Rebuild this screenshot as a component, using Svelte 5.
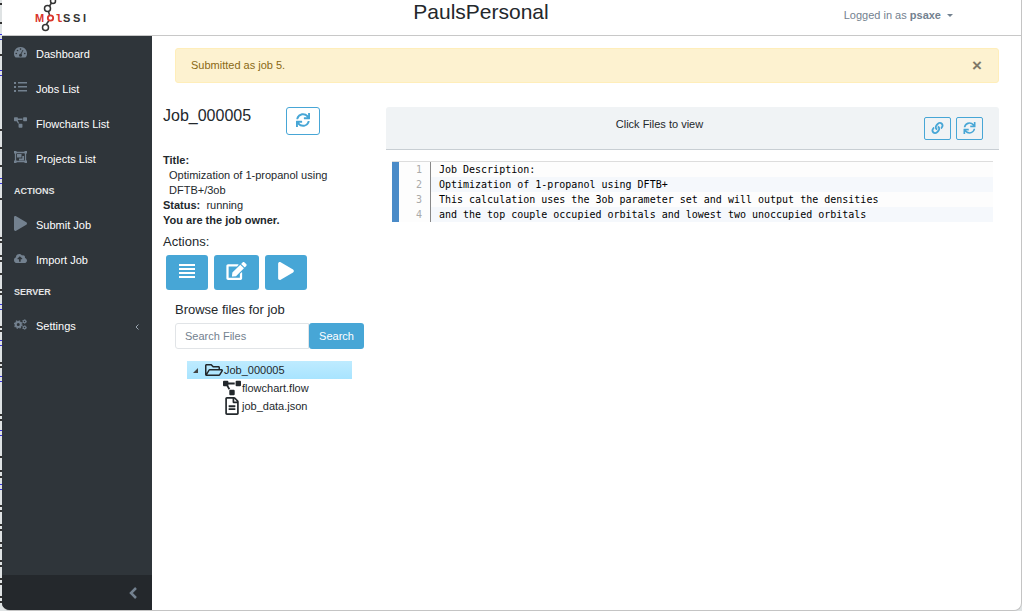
<script>
  const sync = 'M440.65 12.57l4 82.77A247.16 247.16 0 0 0 255.83 8C134.73 8 33.91 94.92 12.29 209.82A12 12 0 0 0 24.09 224h49.05a12 12 0 0 0 11.67-9.26 175.91 175.91 0 0 1 317-56.94l-101.46-4.86a12 12 0 0 0-12.57 12v47.41a12 12 0 0 0 12 12H500a12 12 0 0 0 12-12V12a12 12 0 0 0-12-12h-47.37a12 12 0 0 0-11.98 12.57zM255.83 432a175.61 175.61 0 0 1-146-77.8l101.8 4.87a12 12 0 0 0 12.57-12v-47.4a12 12 0 0 0-12-12H12a12 12 0 0 0-12 12V500a12 12 0 0 0 12 12h47.35a12 12 0 0 0 12-12.6l-4.15-82.57A247.17 247.17 0 0 0 255.83 504c121.11 0 221.93-86.92 243.55-201.82a12 12 0 0 0-11.8-14.18h-49.05a12 12 0 0 0-11.67 9.26A175.86 175.86 0 0 1 255.83 432z';
  const play = 'M424.4 214.7L72.4 6.6C43.8-10.3 0 6.1 0 47.9V464c0 37.5 40.7 60.1 72.4 41.3l352-208c31.4-18.5 31.5-64.1 0-82.6z';
  const edit = 'M402.6 83.2l90.2 90.2c3.8 3.8 3.8 10 0 13.8L274.4 405.6l-92.8 10.3c-12.4 1.4-22.9-9.1-21.5-21.5l10.3-92.8L388.8 83.2c3.8-3.8 10-3.8 13.8 0zm162-22.9l-48.8-48.8c-15.2-15.2-39.9-15.2-55.2 0l-35.4 35.4c-3.8 3.8-3.8 10 0 13.8l90.2 90.2c3.8 3.8 10 3.8 13.8 0l35.4-35.4c15.2-15.3 15.2-40 0-55.2zM384 346.2V448H64V128h229.8c3.2 0 6.2-1.3 8.5-3.5l40-40c7.6-7.6 2.2-20.5-8.5-20.5H48C21.5 64 0 85.5 0 112v352c0 26.5 21.5 48 48 48h352c26.5 0 48-21.5 48-48V306.2c0-10.7-12.9-16-20.5-8.5l-40 40c-2.2 2.3-3.5 5.3-3.5 8.5z';
  const folder = 'M527.9 224H480v-48c0-26.5-21.5-48-48-48H272l-64-64H48C21.5 64 0 85.5 0 112v288c0 26.5 21.5 48 48 48h400c16.5 0 31.9-8.5 40.7-22.6l79.9-128c20-31.9-3-73.4-40.7-73.4zM48 118c0-3.3 2.7-6 6-6h134.1l64 64H426c3.3 0 6 2.7 6 6v42H152c-16.8 0-32.4 8.8-41.1 23.2L48 351.4zm400 282H72l77.2-128H528z';
  const diagram = 'M384 320H256c-17.67 0-32 14.33-32 32v128c0 17.67 14.33 32 32 32h128c17.67 0 32-14.33 32-32V352c0-17.67-14.33-32-32-32zM192 32c0-17.67-14.33-32-32-32H32C14.33 0 0 14.33 0 32v128c0 17.67 14.33 32 32 32h95.72l73.16 128.04C211.98 300.98 232.4 288 256 288h.28L192 175.51V128h224V64H192V32zM608 0H480c-17.67 0-32 14.33-32 32v128c0 17.67 14.33 32 32 32h128c17.67 0 32-14.33 32-32V32c0-17.67-14.33-32-32-32z';
  const file = 'M288 248v28c0 6.6-5.4 12-12 12H108c-6.6 0-12-5.4-12-12v-28c0-6.6 5.4-12 12-12h168c6.6 0 12 5.4 12 12zm-12 72H108c-6.6 0-12 5.4-12 12v28c0 6.6 5.4 12 12 12h168c6.6 0 12-5.4 12-12v-28c0-6.6-5.4-12-12-12zm108-188.1V464c0 26.5-21.5 48-48 48H48c-26.5 0-48-21.5-48-48V48C0 21.5 21.5 0 48 0h204.1C264.8 0 277 5.1 286 14.1L369.9 98c9 8.9 14.1 21.2 14.1 33.9zm-128-80V128h76.1L256 51.9zM336 464V176H232c-13.3 0-24-10.7-24-24V48H48v416h288z';
  const link = 'M326.612 185.391c59.747 59.809 58.927 155.698.36 214.59-.11.12-.24.25-.36.37l-67.2 67.2c-59.27 59.27-155.699 59.262-214.96 0-59.27-59.26-59.27-155.7 0-214.96l37.106-37.106c9.84-9.84 26.786-3.3 27.294 10.606.648 17.722 3.826 35.527 9.69 52.721 1.986 5.822.567 12.262-3.783 16.612l-13.087 13.087c-28.026 28.026-28.905 73.66-1.155 101.96 28.024 28.579 74.086 28.749 102.325.51l67.2-67.19c28.191-28.191 28.073-73.757 0-101.83-3.701-3.694-7.429-6.564-10.341-8.569a16.037 16.037 0 0 1-6.947-12.606c-.396-10.567 3.348-21.456 11.698-29.806l21.054-21.055c5.521-5.521 14.182-6.199 20.584-1.731a152.482 152.482 0 0 1 20.522 17.197zM467.547 44.449c-59.261-59.262-155.69-59.27-214.96 0l-67.2 67.2c-.12.12-.25.25-.36.37-58.566 58.892-59.387 154.781.36 214.59a152.454 152.454 0 0 0 20.521 17.196c6.402 4.468 15.064 3.789 20.584-1.731l21.054-21.055c8.35-8.35 12.094-19.239 11.698-29.806a16.037 16.037 0 0 0-6.947-12.606c-2.912-2.005-6.64-4.875-10.341-8.569-28.073-28.073-28.191-73.639 0-101.83l67.2-67.19c28.239-28.239 74.3-28.069 102.325.51 27.75 28.3 26.872 73.934-1.155 101.96l-13.087 13.087c-4.35 4.35-5.769 10.79-3.783 16.612 5.864 17.194 9.042 34.999 9.69 52.721.509 13.906 17.454 20.446 27.294 10.606l37.106-37.106c59.271-59.259 59.271-155.699.001-214.959z';
  const cloud = 'M537.6 226.6c4.1-10.7 6.4-22.4 6.4-34.6 0-53-43-96-96-96-19.7 0-38.1 6-53.3 16.2C367 64.2 315.3 32 256 32c-88.4 0-160 71.6-160 160 0 2.7.1 5.4.2 8.1C40.2 219.8 0 273.2 0 336c0 79.5 64.5 144 144 144h368c70.7 0 128-57.3 128-128 0-61.9-44-113.6-102.4-125.4zM393.4 288H328v112c0 8.8-7.2 16-16 16h-48c-8.8 0-16-7.2-16-16V288h-65.4c-14.3 0-21.4-17.2-11.3-27.3l105.4-105.4c6.2-6.2 16.4-6.2 22.6 0l105.4 105.4c10.1 10.1 2.9 27.3-11.3 27.3z';

  const groups = [
    { title: '', items: [['gauge', 'Dashboard'], ['list', 'Jobs List'], ['diagram', 'Flowcharts List'], ['group', 'Projects List']] },
    { title: 'ACTIONS', items: [['play', 'Submit Job'], ['cloud', 'Import Job']] },
    { title: 'SERVER', items: [['cogs', 'Settings']] }
  ];
  const lines = [
    'Job Description:',
    'Optimization of 1-propanol using DFTB+',
    'This calculation uses the 3ob parameter set and will output the densities',
    'and the top couple occupied orbitals and lowest two unoccupied orbitals'
  ];
  const darkMarks = [3, 22, 54, 129, 147, 165, 198, 237, 241, 255, 260, 273, 289, 293, 326, 330, 362, 366, 414, 419, 456, 470, 476, 505, 510, 524, 529, 542, 547, 560, 565, 578, 583, 596, 601];
  const linkMarks = [34, 39, 70, 75, 178, 183, 304, 309, 340, 345, 376, 381, 430, 435, 484, 489];

  let alertOpen = $state(true);
  let query = $state('');
</script>

{#snippet glyph(path, box, cls)}
  <svg class={cls} viewBox={box} fill="currentColor" aria-hidden="true"><path d={path} /></svg>
{/snippet}

{#snippet navIcon(name)}
  {#if name === 'diagram'}
    {@render glyph(diagram, '0 0 640 512', 'nav-icon')}
  {:else if name === 'play'}
    {@render glyph(play, '0 0 448 512', 'nav-icon play')}
  {:else if name === 'cloud'}
    {@render glyph(cloud, '0 0 640 512', 'nav-icon')}
  {:else if name === 'gauge'}
    <svg class="nav-icon" viewBox="0 0 26 22" aria-hidden="true">
      <path fill="currentColor" d="M13 0a13 13 0 0 0-11.200 19.600q.6 1.400 2 1.400h18.400q1.400 0 2-1.400A13 13 0 0 0 13 0z" />
      <g fill="#2f353a"><circle cx="4.500" cy="13" r="1.600" /><circle cx="7" cy="7" r="1.600" /><circle cx="13" cy="4.200" r="1.600" /><circle cx="21.500" cy="13" r="1.600" /><circle cx="13" cy="16.500" r="3" /></g>
      <path d="M13 16L18 6" stroke="#2f353a" stroke-width="1.800" />
    </svg>
  {:else if name === 'list'}
    <svg class="nav-icon" viewBox="0 0 13 13" fill="currentColor" aria-hidden="true">
      <path d="M0 1h2v2H0zM0 5h2v2H0zM0 9h2v2H0zM4 1h9v1.500H4zM4 5h9v1.500H4zM4 9h9v1.500H4z" />
    </svg>
  {:else if name === 'group'}
    <svg class="nav-icon" viewBox="0 0 13 13" aria-hidden="true">
      <path d="M1.500 1.500h10v9h-10z" fill="none" stroke="currentColor" stroke-width="1.300" />
      <path fill="currentColor" d="M0 0h2.500v2.500H0zM10.500 0H13v2.500h-2.500zM0 9.500h2.500V12H0zM10.500 9.500H13V12h-2.500zM3 3h4.500v3.500H3zM8.300 5H10v4.500H5V7.500h3.300z" />
    </svg>
  {:else}
    <svg class="nav-icon" viewBox="0 0 26 22" fill="none" stroke="currentColor" aria-hidden="true">
      <circle cx="8.500" cy="11" r="5" stroke-width="4" />
      <circle cx="8.500" cy="11" r="7.500" stroke-width="2.500" stroke-dasharray="3 2.890" />
      <circle cx="21" cy="5" r="2.600" stroke-width="2.200" /><circle cx="21" cy="5" r="4" stroke-width="1.500" stroke-dasharray="2 2.190" />
      <circle cx="21" cy="17" r="2.600" stroke-width="2.200" /><circle cx="21" cy="17" r="4" stroke-width="1.500" stroke-dasharray="2 2.190" />
    </svg>
  {/if}
{/snippet}

<div class="desktop">
  <svg class="behind" aria-hidden="true">
    {#each darkMarks as y}<rect x="0" {y} width="2" height="2" fill="#333" />{/each}
    {#each linkMarks as y}<rect x="0" {y} width="2" height="1" fill="#3a35e0" />{/each}
  </svg>
  <div class="window">
    <header>
      <a class="brand" href="#home" aria-label="MolSSI">
        <svg viewBox="0 0 60 35" aria-hidden="true">
          <g fill="none" stroke="#333" stroke-width="1.500">
            <circle cx="18" cy="1" r="2.500" /><path d="M16.500 3L14.500 6" />
            <circle cx="12.500" cy="8.500" r="3" /><path d="M13.500 11.500L14.500 15M14 20.500L11.500 24" />
            <circle cx="10.500" cy="27.500" r="3" />
          </g>
          <circle cx="15.500" cy="18" r="2.700" fill="none" stroke="#d9342b" stroke-width="1.800" />
          <g font-family="Liberation Sans, Arial, sans-serif" font-weight="bold" font-size="11">
            <text x="0" y="22" fill="#d9342b">M</text>
            <text x="28" y="22" fill="#333">S</text><text x="38" y="22" fill="#333">S</text><text x="48" y="22" fill="#333">I</text>
            <text x="21" y="22" fill="#d9342b" font-family="DejaVu Sans Mono, monospace">l</text>
          </g>
        </svg>
      </a>
      <h1>PaulsPersonal</h1>
      <button class="user" type="button">Logged in as <b>psaxe</b><span class="caret"></span></button>
    </header>

    <div class="body">
      <aside>
        <nav>
          {#each groups as group}
            {#if group.title}<h2>{group.title}</h2>{/if}
            {#each group.items as [icon, label]}
              <a class="item" href="#{icon}">
                {@render navIcon(icon)}
                <span>{label}</span>
                {#if icon === 'cogs'}
                  <svg class="more" viewBox="0 0 4 6" aria-hidden="true"><path d="M3.500.5L1 3l2.500 2.500" fill="none" stroke="currentColor" /></svg>
                {/if}
              </a>
            {/each}
          {/each}
        </nav>
        <button class="minimizer" type="button" aria-label="Collapse sidebar">
          <svg viewBox="0 0 8 12" aria-hidden="true"><path d="M7 1L2 6l5 5" fill="none" stroke="currentColor" stroke-width="2.500" /></svg>
        </button>
      </aside>

      <main>
        {#if alertOpen}
          <div class="alert" role="alert">
            <span>Submitted as job 5.</span>
            <button type="button" aria-label="Close" onclick={() => (alertOpen = false)}>×</button>
          </div>
        {/if}

        <div class="columns">
          <section class="job">
            <div class="job-head">
              <h3>Job_000005</h3>
              <button class="outline large" type="button" aria-label="Refresh job">{@render glyph(sync, '0 0 512 512', 'i14')}</button>
            </div>
            <div class="details">
              <b>Title:</b>
              <p>Optimization of 1-propanol using DFTB+/3ob</p>
              <div><b>Status:</b>&nbsp; running</div>
              <b>You are the job owner.</b>
            </div>
            <h4>Actions:</h4>
            <div class="actions">
              <button class="solid" type="button" aria-label="Job description">
                <svg class="i18" viewBox="0 0 18 18" fill="currentColor" aria-hidden="true"><path d="M1 2h16v2H1zM1 6h16v2H1zM1 10h16v2H1zM1 14h16v2H1z" /></svg>
              </button>
              <button class="solid" type="button" aria-label="Edit job">{@render glyph(edit, '0 0 576 512', 'i20')}</button>
              <button class="solid" type="button" aria-label="Run job">{@render glyph(play, '0 0 448 512', 'i18')}</button>
            </div>
            <div class="browse">
              <h4><label for="file-search">Browse files for job</label></h4>
              <form class="search" onsubmit={(e) => e.preventDefault()}>
                <input id="file-search" type="text" placeholder="Search Files" bind:value={query} />
                <button type="submit">Search</button>
              </form>
              <ul class="tree">
                <li>
                  <a class="root" href="#job">
                    <svg class="toggle" viewBox="0 0 6 6" aria-hidden="true"><path d="M6 0v6H0z" fill="#444" /></svg>
                    {@render glyph(folder, '0 0 576 512', 'i18')}<span>Job_000005</span>
                  </a>
                  <ul>
                    <li><a href="#flowchart">{@render glyph(diagram, '0 0 640 512', 'i18')}<span>flowchart.flow</span></a></li>
                    <li><a href="#data">{@render glyph(file, '0 0 384 512', 'i18')}<span>job_data.json</span></a></li>
                  </ul>
                </li>
              </ul>
            </div>
          </section>

          <section class="viewer">
            <div class="viewer-head">
              <span></span>
              <span class="hint">Click Files to view</span>
              <div class="tools">
                <button class="outline" type="button" aria-label="Copy link">{@render glyph(link, '0 0 512 512', 'i12')}</button>
                <button class="outline" type="button" aria-label="Refresh file">{@render glyph(sync, '0 0 512 512', 'i12')}</button>
              </div>
            </div>
            <ol class="code">
              {#each lines as line, i}
                <li><span class="number">{i + 1}</span><code>{line}</code></li>
              {/each}
            </ol>
          </section>
        </div>
      </main>
    </div>
  </div>
</div>

<style>
  :global(body) { background: #dfe3e4; }
  .desktop, .desktop * { box-sizing: border-box; }
  .desktop {
    position: relative;
    display: flex;
    min-height: 100vh;
    padding-left: 2px;
    color: #23282c;
    font: 11px/15px "Liberation Sans", Arial, sans-serif;
  }
  .behind { position: absolute; left: 0; top: 0; width: 2px; height: 100%; }
  .window {
    flex: 1;
    display: flex;
    flex-direction: column;
    overflow: hidden;
    background: #fff;
    border: solid #c4c4c4;
    border-width: 0 1px 1px 0;
    border-radius: 0 0 8px 8px;
  }
  h1, h2, h3, h4, p, ul, ol { margin: 0; padding: 0; font-weight: normal; }
  ul, ol { list-style: none; }
  button, input { font: inherit; margin: 0; }
  button { cursor: pointer; }
  a { color: inherit; text-decoration: none; }
  svg { display: block; flex: none; }

  header {
    display: grid;
    grid-template-columns: 1fr auto 1fr;
    height: 36px;
    padding: 0 68px 0 33px;
    border-bottom: 1px solid #c8c8c8;
  }
  .brand svg { width: 60px; height: 35px; }
  h1 { font-size: 21px; line-height: 24px; margin-right: 26px; }
  .user {
    display: flex;
    align-items: center;
    justify-self: end;
    height: 30px;
    padding: 0;
    border: 0;
    background: none;
    color: #73818f;
    white-space: pre;
  }
  .caret { margin-left: 6px; border: 3px solid transparent; border-top-color: currentColor; border-bottom: 0; }

  .body { flex: 1; display: flex; }
  aside { flex: none; display: flex; flex-direction: column; width: 150px; background: #2f353a; color: #fff; }
  nav { flex: 1; padding-top: 1px; }
  .item { display: flex; align-items: center; gap: 9px; height: 35px; padding: 0 13px 0 12px; }
  .nav-icon { width: 13px; height: 13px; margin-bottom: 4px; color: #73818f; }
  .play { height: 15px; }
  .more { width: 4px; height: 6px; margin-left: auto; color: #9aa5b0; }
  h2 { height: 31px; padding: 7px 12px; color: #e4e5e6; font-size: 9px; font-weight: bold; }
  .minimizer {
    display: flex;
    align-items: center;
    justify-content: flex-end;
    height: 35px;
    padding: 0 15px;
    border: 0;
    background: #24282c;
    color: #73818f;
  }
  .minimizer svg { width: 8px; height: 12px; }

  main { flex: 1; min-width: 0; padding: 12px 22px 12px 11px; }
  .alert {
    display: flex;
    align-items: center;
    justify-content: space-between;
    height: 35px;
    margin: 0 0 24px 12px;
    padding: 0 15px;
    border: 1px solid #ffeeba;
    border-radius: 3px;
    background: #fdf2d0;
    color: #8a6914;
  }
  .alert button { padding: 0; border: 0; background: none; color: #7f7968; font-size: 17px; font-weight: bold; width: 12px; }
  .columns { display: grid; grid-template-columns: 4fr 11fr; align-items: start; }

  .job { min-width: 0; }
  .job-head { display: flex; align-items: flex-start; gap: 35px; height: 46px; }
  h3 { font-size: 16px; line-height: 18px; }
  .outline {
    display: grid;
    place-items: center;
    width: 27px;
    height: 23px;
    padding: 0 0 2px;
    border: 1px solid #47a6d6;
    border-radius: 2px;
    background: transparent;
    color: #47a6d6;
  }
  .large { width: 34px; height: 28px; border-radius: 3px; background: #fff; }
  .details p { width: 170px; padding-left: 6px; }
  h4 { font-size: 13px; line-height: 16px; }
  .job > h4 { margin: 6px 0 5px; }
  .actions { display: flex; gap: 6px; padding-left: 3px; }
  .solid {
    display: grid;
    place-items: center;
    height: 35px;
    padding: 0 12px 3px;
    border: 0;
    border-radius: 3px;
    background: #47a6d6;
    color: #fff;
  }
  .i12 { width: 13px; height: 12px; }
  .i14 { width: 14px; height: 14px; }
  .i18 { width: 18px; height: 18px; }
  .i20 { width: 21px; height: 18px; }
  .browse { padding: 12px 22px 0 12px; }
  .browse h4 { margin-bottom: 5px; }
  .search { display: flex; height: 26px; margin-bottom: 12px; }
  .search input {
    flex: 1;
    min-width: 0;
    padding: 0 9px;
    border: 1px solid #e1e4e7;
    border-radius: 3px 0 0 3px;
    color: #5c6873;
  }
  .search input::placeholder { color: #73818f; opacity: 1; }
  .search button { padding: 0 10px; border: 0; border-radius: 3px; background: #47a6d6; color: #fff; }
  .tree { margin: 0 12px; }
  .tree a { display: flex; align-items: center; height: 18px; gap: 1px; }
  .tree ul { padding-left: 36px; }
  .tree .root { padding-left: 6px; background: linear-gradient(#beebff, #a8e4ff); }
  .toggle { width: 5px; height: 5px; margin-right: 6px; }

  .viewer { min-width: 0; }
  .viewer-head {
    display: grid;
    grid-template-columns: 1fr auto 1fr;
    height: 43px;
    padding: 10px 16px 0;
    border-bottom: 1px solid #c8ced3;
    border-radius: 3px 3px 0 0;
    background: #f0f3f5;
  }
  .hint { margin-right: 66px; }
  .tools { display: flex; gap: 5px; justify-content: flex-end; }
  .code {
    margin: 11px 6px 0;
    border-top: 1px solid #ddd;
    color: #000;
    font: 10px/15px "DejaVu Sans Mono", monospace;
  }
  .code li { display: flex; background: #fdfdfd; }
  .code li:nth-child(even) { background: #f5f8fc; }
  .number {
    flex: none;
    width: 39px;
    padding-right: 8px;
    border-left: 7px solid #4a8bc8;
    border-right: 1px solid #888;
    background: #fdfdfd;
    color: #aaa;
    text-align: right;
  }
  .code code { padding-left: 8px; font: inherit; white-space: pre; }
</style>
